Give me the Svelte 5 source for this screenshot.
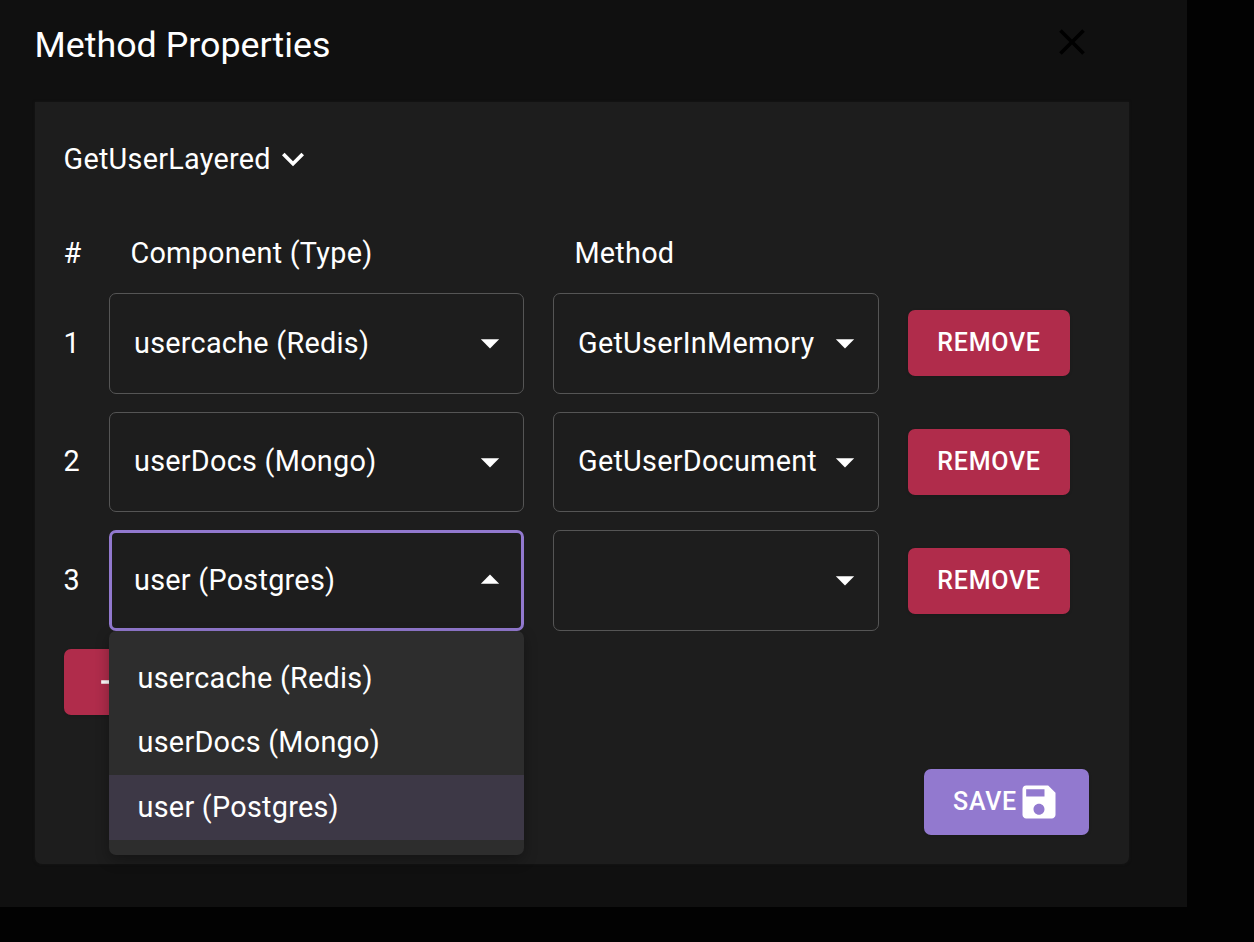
<script>
  const options = ['usercache (Redis)', 'userDocs (Mongo)', 'user (Postgres)'];
  const rows = [
    { component: options[0], method: 'GetUserInMemory' },
    { component: options[1], method: 'GetUserDocument' },
    { component: options[2], method: '', open: true }
  ];
</script>

<div class="page">
  <section class="dialog">
    <header>
      <h2>Method Properties</h2>
      <button class="close" aria-label="Close">
        <svg class="icon" viewBox="0 0 24 24"><path d="M19 6.41 17.59 5 12 10.59 6.41 5 5 6.41 10.59 12 5 17.59 6.41 19 12 13.41 17.59 19 19 17.59 13.41 12z" /></svg>
      </button>
    </header>

    <div class="panel">
      <div class="name">
        <span>GetUserLayered</span>
        <svg class="icon" viewBox="0 0 24 24"><path d="M16.59 8.59 12 13.17 7.41 8.59 6 10l6 6 6-6z" /></svg>
      </div>

      <div class="columns head">
        <span class="index">#</span>
        <span class="label">Component (Type)</span>
        <span class="label">Method</span>
      </div>

      <div class="list">
        {#each rows as row, i}
          <div class="columns">
            <span class="index">{i + 1}</span>
            <div class="select" class:open={row.open}>
              <span>{row.component}</span>
              <svg class="icon" viewBox="0 0 24 24"><path d="m7 10 5 5 5-5z" /></svg>
              {#if row.open}
                <ul class="menu">
                  {#each options as option}
                    <li class:selected={option === row.component}>{option}</li>
                  {/each}
                </ul>
              {/if}
            </div>
            <div class="select">
              <span>{row.method}</span>
              <svg class="icon" viewBox="0 0 24 24"><path d="m7 10 5 5 5-5z" /></svg>
            </div>
            <button class="btn red">REMOVE</button>
          </div>
        {/each}
      </div>

      <button class="btn red add" aria-label="Add">
        <svg class="icon" viewBox="0 0 24 24"><path d="M19 13h-6v6h-2v-6H5v-2h6V5h2v6h6z" /></svg>
      </button>

      <div class="actions">
        <button class="btn save">
          <span>SAVE</span>
          <svg class="icon" viewBox="0 0 24 24"><path d="M17 3H5c-1.11 0-2 .9-2 2v14c0 1.1.89 2 2 2h14c1.1 0 2-.9 2-2V7zm-5 16c-1.66 0-3-1.34-3-3s1.34-3 3-3 3 1.34 3 3-1.34 3-3 3m3-10H5V5h10z" /></svg>
        </button>
      </div>
    </div>
  </section>
</div>

<style>
  :global(body) {
    background: #020202;
  }

  .page {
    height: 942px;
    overflow: hidden;
    color: #fff;
    font: 400 28.8px/44px Roboto, sans-serif;
    letter-spacing: 0.27px;
  }

  .dialog {
    box-sizing: border-box;
    width: 1187px;
    height: 907px;
    padding: 0 58px 0 35px;
    background: #101010;
  }

  header {
    display: flex;
    justify-content: space-between;
    align-items: center;
    height: 102px;
    box-sizing: border-box;
    padding: 0 34.6px 18px 0;
  }

  h2 {
    margin: 6px 0 0 -0.5px;
    font-size: 35.8px;
    font-weight: 400;
    letter-spacing: 0;
  }

  button {
    border: 0;
    padding: 0;
    font: inherit;
    color: inherit;
    background: none;
  }

  .icon {
    display: block;
    flex: none;
    width: 44px;
    height: 44px;
    fill: currentColor;
  }

  .close {
    color: #000;
  }

  .panel {
    box-sizing: border-box;
    height: 762px;
    padding: 35px 29px 0;
    border-radius: 0 0 7px 7px;
    background: #1d1d1d;
    box-shadow: 0 0 3px rgba(32, 32, 32, 0.6);
  }

  .name {
    display: flex;
    align-items: center;
  }

  .name span {
    margin-left: -0.5px;
  }

  .columns {
    display: grid;
    grid-template-columns: 16px 415px 326px 162px;
    column-gap: 29px;
    align-items: center;
  }

  .head {
    height: 44px;
    margin: 50px 0 18px;
  }

  .label {
    padding-left: 21.4px;
  }

  .list {
    display: grid;
    grid-template-rows: 101px 100px 101px;
    row-gap: 18px;
  }

  .index {
    margin-left: -0.6px;
  }

  .list .index,
  .select > span {
    padding-bottom: 2px;
  }

  .select {
    position: relative;
    display: flex;
    align-items: center;
    justify-content: space-between;
    box-sizing: border-box;
    height: 100%;
    padding: 0 11.5px 0 24px;
    border: 1px solid #555;
    border-radius: 7px;
    white-space: nowrap;
  }

  .select > .icon {
    margin-bottom: 1px;
  }

  .select.open {
    padding: 0 9.5px 0 22px;
    border: 3px solid #9279cf;
  }

  .open > .icon {
    transform: rotate(180deg);
  }

  .menu {
    position: absolute;
    z-index: 1;
    top: 98px;
    left: -3px;
    box-sizing: border-box;
    width: 415px;
    height: 224px;
    margin: 0;
    padding: 15px 0 0;
    list-style: none;
    border-radius: 7px;
    background: #2d2d2d;
    box-shadow: 0 5px 14px rgba(0, 0, 0, 0.3);
  }

  li {
    height: 64.6px;
    padding-left: 28.6px;
    line-height: 64px;
  }

  li:nth-child(2) {
    line-height: 63px;
  }

  .selected {
    background: #3d3846;
  }

  .btn {
    display: flex;
    align-items: center;
    justify-content: center;
    height: 66px;
    border-radius: 7px;
    font-size: 25px;
    font-weight: 500;
    letter-spacing: 0.72px;
    box-shadow: 0 1px 3px rgba(0, 0, 0, 0.15);
  }

  .columns:first-child .btn {
    margin-bottom: 1px;
  }

  .red {
    background: #b02c4b;
  }

  .add {
    width: 100px;
    margin-top: 18px;
  }

  .actions {
    display: flex;
    justify-content: flex-end;
    margin-top: 54px;
    padding-right: 11px;
  }

  .save {
    box-sizing: border-box;
    width: 165px;
    padding-left: 1px;
    background: #9279cf;
  }
</style>
